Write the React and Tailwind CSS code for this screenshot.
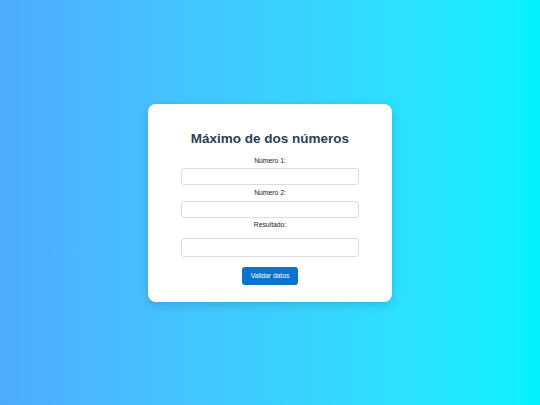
export default function App() {
  return (
    <div
      className="w-[540px] h-[405px] flex items-center justify-center bg-gradient-to-r from-[#4facfe] to-[#00f2fe]"
      style={{ fontFamily: '"Liberation Sans", Arial, sans-serif' }}
    >
      <div className="w-[244px] h-[198px] bg-white rounded-[8px] shadow-[0_3px_10px_rgba(0,0,0,0.15)] flex flex-col items-center pt-[25px]">
        <h1 className="text-[13.5px] leading-[20px] font-bold text-[#2c3e50]">Máximo de dos números</h1>
        <label className="mt-[7px] text-[6.8px] leading-[10px] text-[#222]">Número 1:</label>
        <input className="mt-[2px] w-[178px] h-[17px] border border-[#dcdcdc] rounded-[3px] bg-white" />
        <label className="mt-[3px] text-[6.8px] leading-[10px] text-[#222]">Número 2:</label>
        <input className="mt-[3px] w-[178px] h-[17px] border border-[#dcdcdc] rounded-[3px] bg-white" />
        <label className="mt-[2.5px] text-[6.8px] leading-[10px] text-[#222]">Resultado:</label>
        <input className="mt-[7.5px] w-[178px] h-[19px] border border-[#dcdcdc] rounded-[3px] bg-white" />
        <button className="mt-[10.5px] w-[56px] h-[17.5px] rounded-[3px] bg-[#0a74cc] text-white text-[6.7px] leading-[17px]">
          Validar datos
        </button>
      </div>
    </div>
  );
}
